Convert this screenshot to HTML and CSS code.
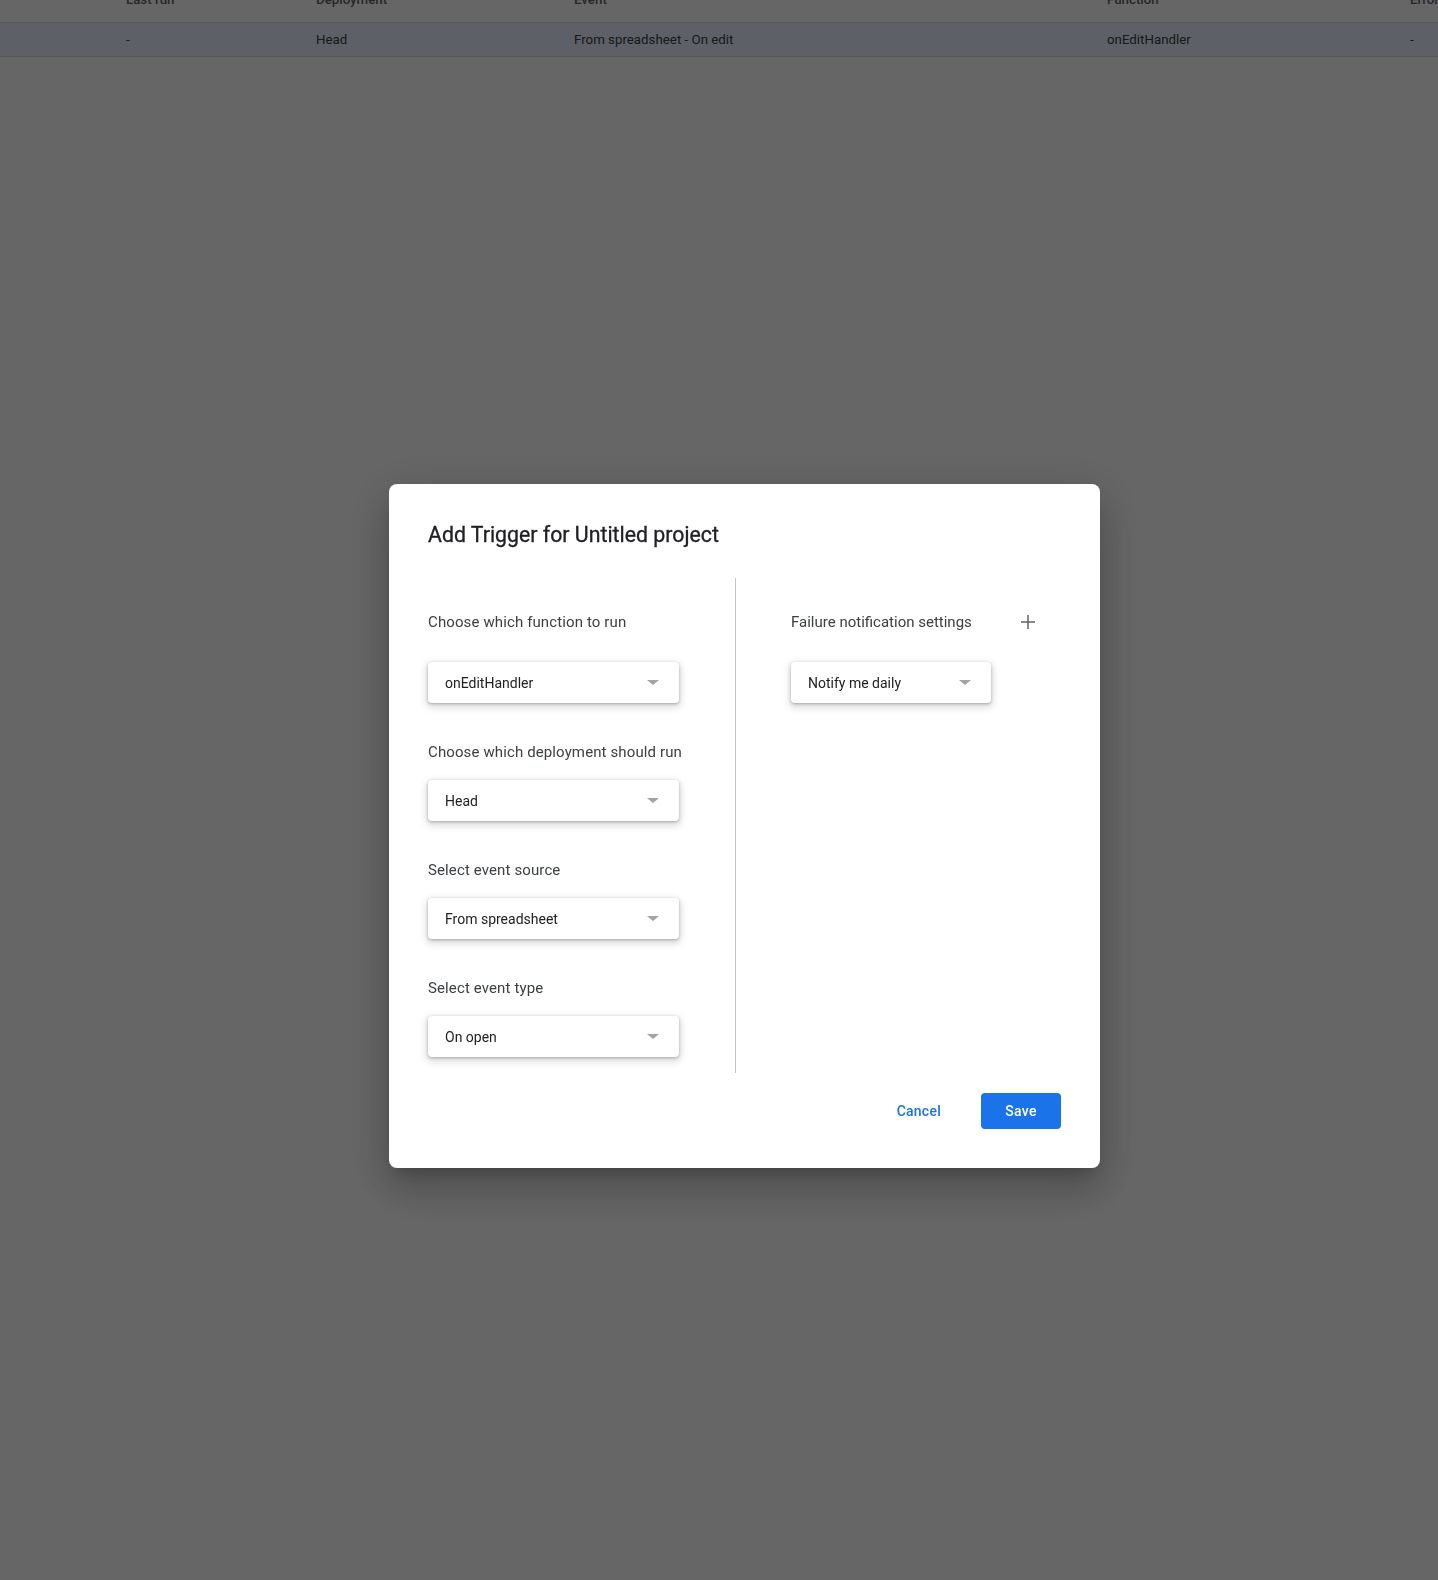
FILE: index.html
```html
<!DOCTYPE html>
<html lang="en">
<head>
    <meta charset="UTF-8">
    <meta name="viewport" content="width=device-width, initial-scale=1.0">
    <title>Triggers</title>
    <link rel="stylesheet" href="styles.css">
</head>
<body>

    <div class="trigger-table">
        <div class="table-row table-head">
            <span></span>
            <span>Last run</span>
            <span>Deployment</span>
            <span>Event</span>
            <span>Function</span>
            <span>Error rate</span>
        </div>
        <div class="table-row table-item">
            <span></span>
            <span>-</span>
            <span>Head</span>
            <span>From spreadsheet - On edit</span>
            <span>onEditHandler</span>
            <span>-</span>
        </div>
    </div>

    <div class="overlay">
        <div class="dialog">
            <h2 class="dialog-title">Add Trigger for Untitled project</h2>

            <div class="dialog-body">
                <div class="column column-left">
                    <div class="field field-first">
                        <div class="field-label">Choose which function to run</div>
                        <div class="select">
                            <span>onEditHandler</span>
                            <span class="select-arrow"></span>
                        </div>
                    </div>

                    <div class="field">
                        <div class="field-label">Choose which deployment should run</div>
                        <div class="select">
                            <span>Head</span>
                            <span class="select-arrow"></span>
                        </div>
                    </div>

                    <div class="field">
                        <div class="field-label">Select event source</div>
                        <div class="select">
                            <span>From spreadsheet</span>
                            <span class="select-arrow"></span>
                        </div>
                    </div>

                    <div class="field">
                        <div class="field-label">Select event type</div>
                        <div class="select">
                            <span>On open</span>
                            <span class="select-arrow"></span>
                        </div>
                    </div>
                </div>

                <div class="column column-right">
                    <div class="notify-head">
                        <div class="field-label">Failure notification settings</div>
                        <button class="icon-btn" type="button" aria-label="Add">
                            <svg width="24" height="24" viewBox="0 0 24 24">
                                <path d="M19 12.75h-6.25V19h-1.5v-6.25H5v-1.5h6.25V5h1.5v6.25H19z" fill="#5f6368"/>
                            </svg>
                        </button>
                    </div>
                    <div class="select select-small">
                        <span>Notify me daily</span>
                        <span class="select-arrow"></span>
                    </div>
                </div>
            </div>

            <div class="dialog-actions">
                <button class="btn btn-text" type="button">Cancel</button>
                <button class="btn btn-primary" type="button">Save</button>
            </div>
        </div>
    </div>

</body>
</html>
```

FILE: styles.css
```css
body {
    margin: 0;
    padding: 0;
    background: #fff;
    font-family: Roboto, "Liberation Sans", sans-serif;
    color: #3c4043;
    overflow: hidden;
    height: 1580px;
}

/* table behind the dialog (page is scrolled a little) */
.trigger-table {
    margin-top: -24px;
    width: 1500px;
}

.table-row {
    display: grid;
    grid-template-columns: 126px 190px 258px 533px 303px 1fr;
    align-items: center;
    font-size: 13.3px;
    border-bottom: 1px solid #dadce0;
}

.table-head {
    height: 46px;
    color: #5f6368;
    font-weight: 500;
}

.table-item {
    height: 33px;
    background: #e8f0fe;
    color: #3c4043;
}

.overlay {
    position: fixed;
    top: 0;
    left: 0;
    right: 0;
    bottom: 0;
    background: rgba(0, 0, 0, 0.6);
    display: flex;
    align-items: flex-start;
    padding: 484px 0 0 389px;
}

.dialog {
    width: 711px;
    box-sizing: border-box;
    background: #fff;
    border-radius: 8px;
    padding: 37px 39px 39px 39px;
    box-shadow: 0 11px 15px -7px rgba(0, 0, 0, 0.2),
                0 24px 38px 3px rgba(0, 0, 0, 0.14),
                0 9px 46px 8px rgba(0, 0, 0, 0.12);
}

.dialog-title {
    margin: 0;
    font-size: 21.3px;
    line-height: 28px;
    font-weight: 400;
    color: #202124;
    -webkit-text-stroke: 0.3px #202124;
}

.dialog-body {
    display: flex;
    margin-top: 29px;
}

.column-left {
    width: 307px;
    border-right: 1px solid #c4c4c4;
    padding-bottom: 16px;
}

.column-right {
    padding-left: 55px;
}

.field {
    margin-top: 39px;
}

.field-first {
    margin-top: 34px;
}

.field-label {
    font-size: 15px;
    line-height: 20px;
    letter-spacing: 0.12px;
    color: #3c4043;
    margin-bottom: 18px;
}

.field-first .field-label {
    margin-bottom: 30px;
}

.select {
    width: 251px;
    height: 41px;
    box-sizing: border-box;
    display: flex;
    align-items: center;
    justify-content: space-between;
    padding: 0 20px 0 17px;
    background: #fff;
    border-radius: 4px;
    font-size: 14px;
    color: #202124;
    box-shadow: 0 1px 3px 0 rgba(60, 64, 67, 0.35),
                0 3px 7px 2px rgba(60, 64, 67, 0.17);
}

.select-small {
    width: 200px;
}

.select-arrow {
    width: 0;
    height: 0;
    border-left: 6px solid transparent;
    border-right: 6px solid transparent;
    border-top: 5px solid #a3a3a3;
}

.notify-head {
    display: flex;
    align-items: center;
    margin-top: 24px;
    margin-bottom: 20px;
}

.notify-head .field-label {
    margin-bottom: 0;
    letter-spacing: 0;
}

.icon-btn {
    width: 40px;
    height: 40px;
    margin-left: 36px;
    border: none;
    background: none;
    padding: 0;
    display: flex;
    align-items: center;
    justify-content: center;
    cursor: pointer;
}

.dialog-actions {
    display: flex;
    justify-content: flex-end;
    gap: 24px;
    margin-top: 20px;
}

.btn {
    height: 36px;
    border: none;
    border-radius: 4px;
    font-family: Roboto, "Liberation Sans", sans-serif;
    font-size: 14px;
    font-weight: 500;
    letter-spacing: 0.25px;
    cursor: pointer;
}

.btn-text {
    background: none;
    color: #1a73e8;
    padding: 0 16px;
}

.btn-primary {
    width: 80px;
    background: #1a73e8;
    color: #fff;
}
```
